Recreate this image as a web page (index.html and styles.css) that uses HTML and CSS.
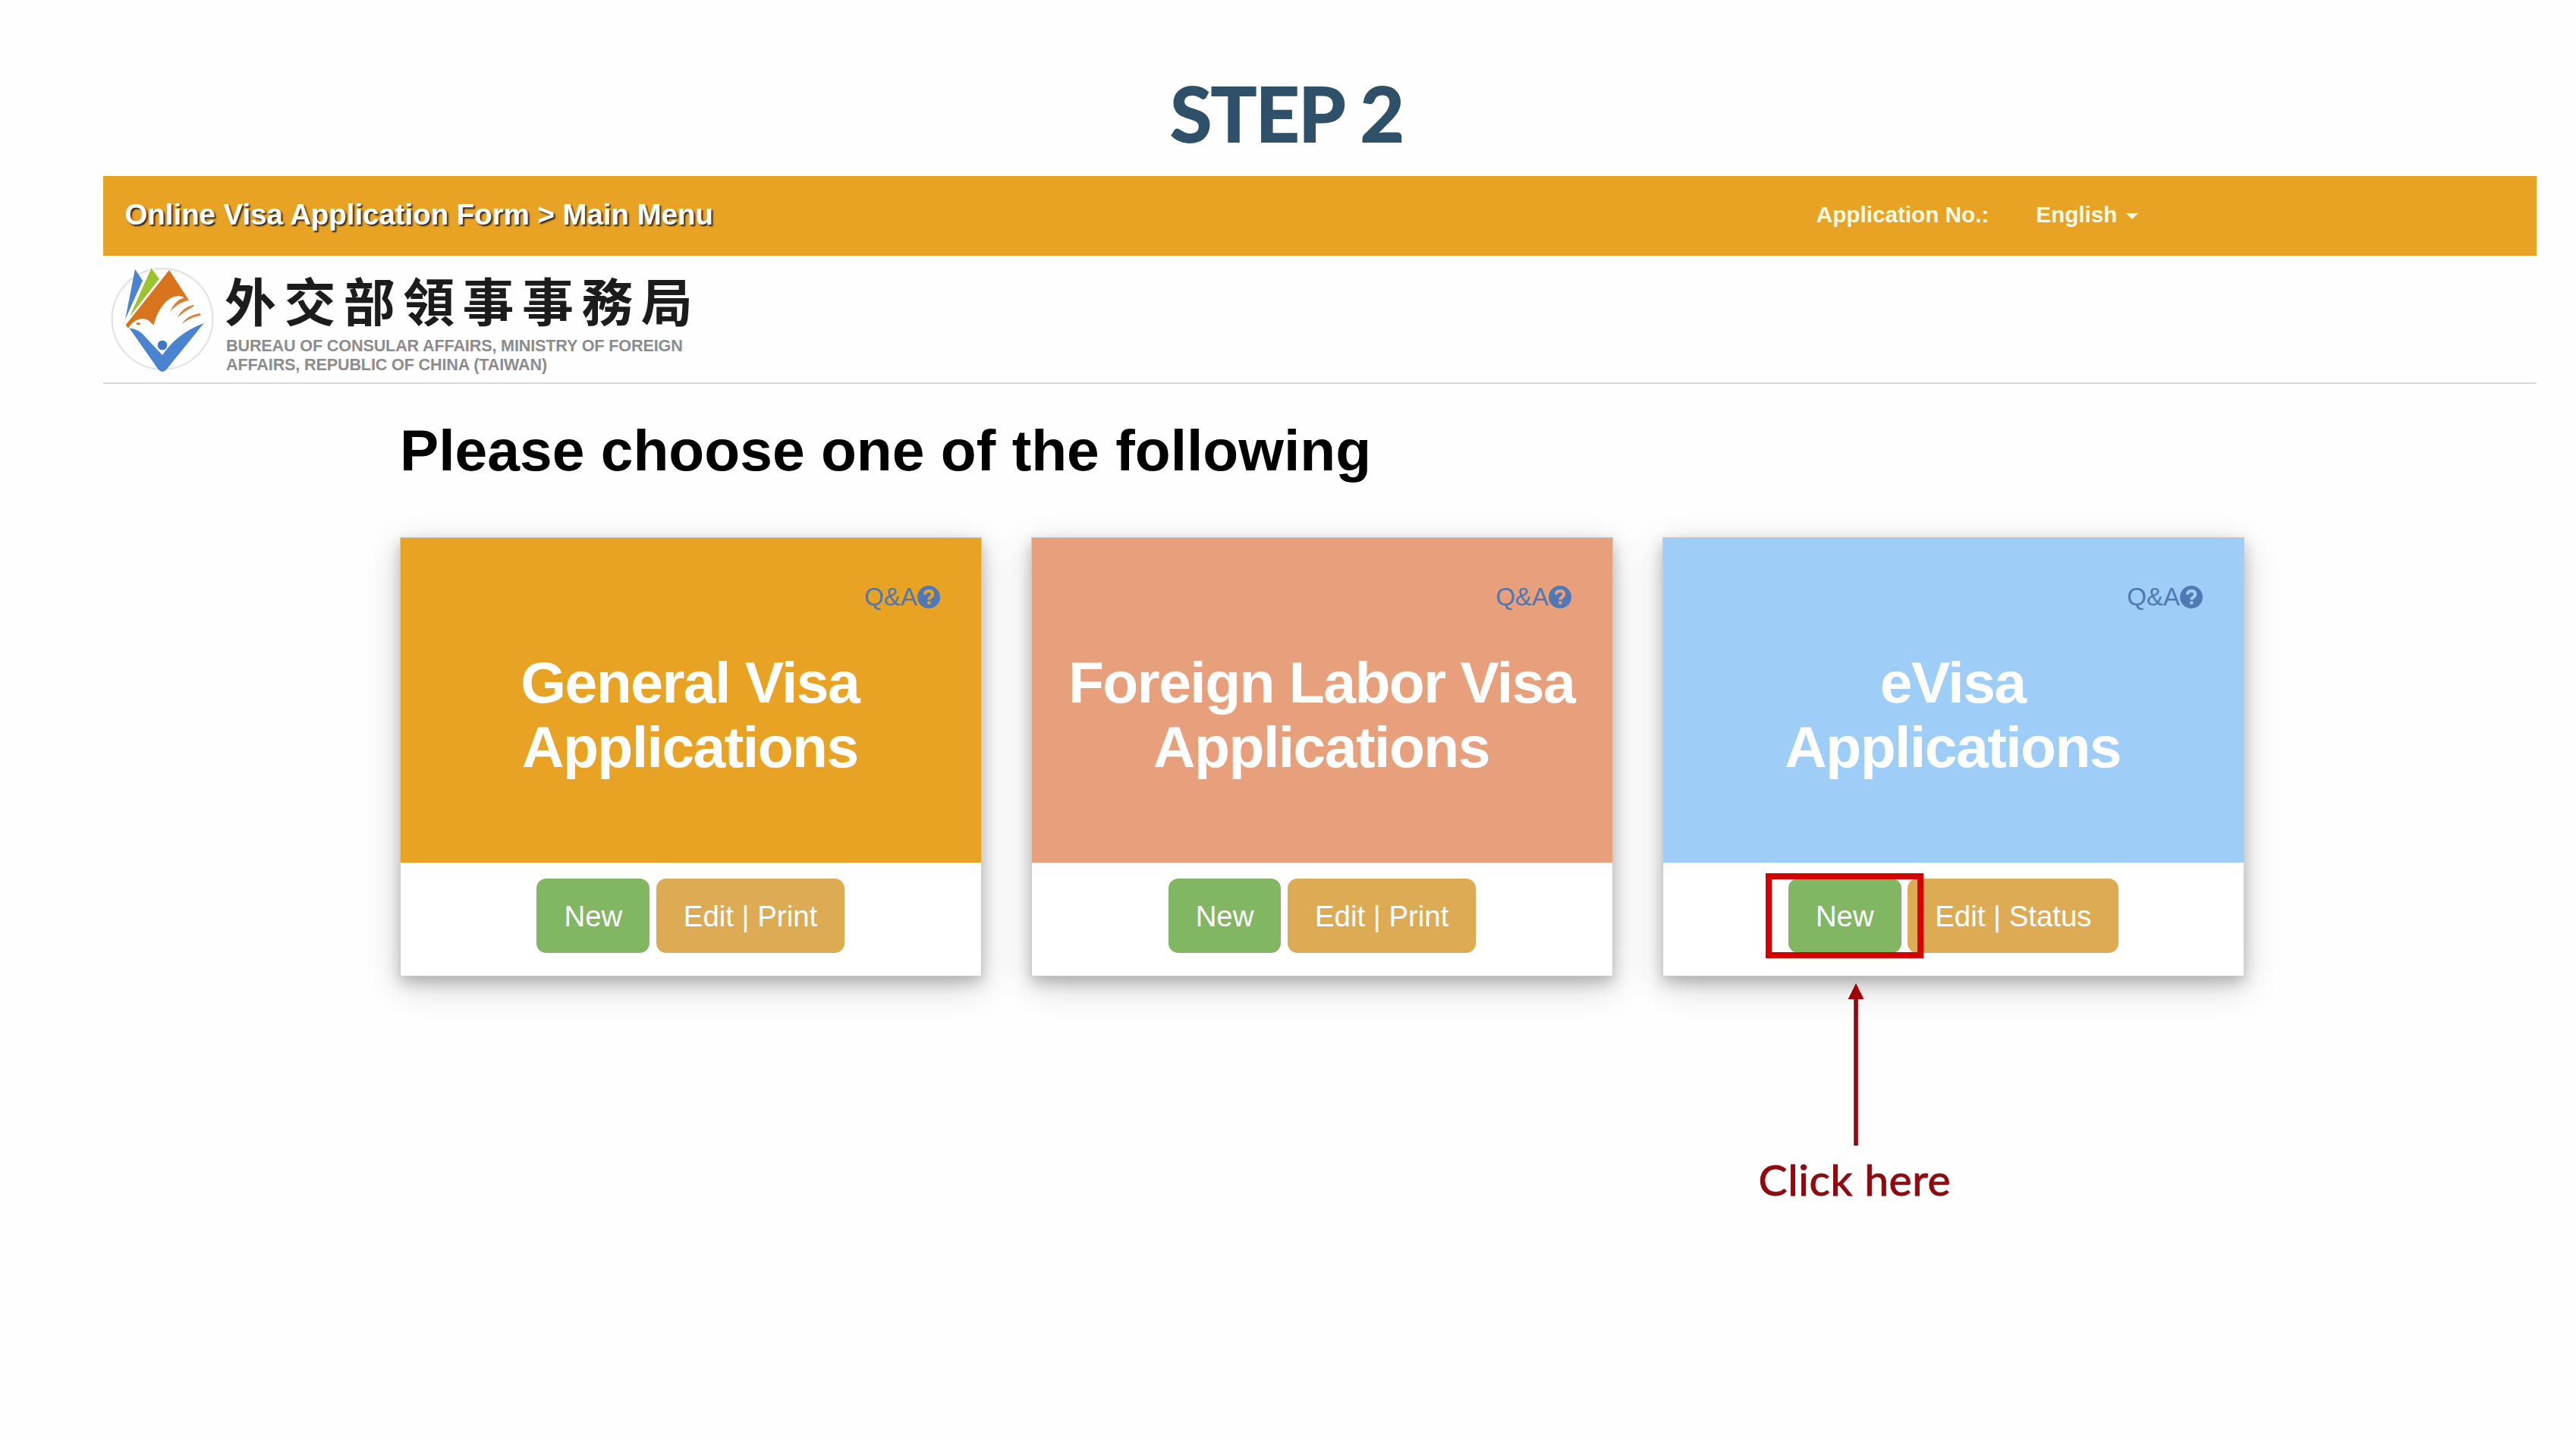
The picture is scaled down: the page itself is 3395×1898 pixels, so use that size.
FILE: index.html
```html
<!DOCTYPE html>
<html lang="en">
<head>
    <meta charset="UTF-8">
    <meta name="viewport" content="width=device-width, initial-scale=1.0">
    <title>Online Visa Application Form - Main Menu</title>
    <link rel="stylesheet" href="styles.css">
</head>
<body>
    <h1 class="step-title">STEP 2</h1>
    <div class="page">
        <nav class="navbar">
            <div class="navbar-title">Online Visa Application Form &gt; Main Menu</div>
            <div class="navbar-menu">
                <span>Application No.:</span>
                <span class="language">English <i class="caret"></i></span>
            </div>
        </nav>
        <header class="logo-bar">
            <svg class="logo" viewBox="60 50 450 440">
                <circle cx="282" cy="270" r="199" fill="none" stroke="#e4e4e6" stroke-width="7"/>
                <path d="M174 73L204 118L135 272Z" fill="#4a84d0"/>
                <path d="M238 65L272 112L144 276Z" fill="#9cc32f" stroke="#fff" stroke-width="4"/>
                <path d="M309 77L388 198Q372 188 360 181Q315 172 283 217Q258 250 248 294L238 287Q228 270 202 269Q170 270 146 307L137 294Z" fill="#d7741d"/>
                <path d="M370 184Q330 197 311 244Q335 210 385 196ZM406 214Q362 223 340 266Q365 242 406 220ZM432 248Q380 255 359 290Q390 264 434 256Z" fill="#d9813a"/>
                <ellipse cx="187" cy="289" rx="8" ry="5" fill="#d7741d"/>
                <path d="M151 306Q188 309 216 343L282 413Q340 326 446 287L298 470Q282 488 266 470Z" fill="#4a84d0"/>
                <circle cx="282" cy="374" r="19" fill="#4077c4"/>
            </svg>
            <div class="logo-text">
                <div class="logo-zh" lang="zh-Hant">外交部領事事務局</div>
                <div class="logo-en">BUREAU OF CONSULAR AFFAIRS, MINISTRY OF FOREIGN<br>AFFAIRS, REPUBLIC OF CHINA (TAIWAN)</div>
            </div>
        </header>
        <main class="content">
            <h2>Please choose one of the following</h2>
            <div class="cards">
                <div class="card">
                    <div class="card-header general">
                        <a class="qa">Q&amp;A<svg viewBox="0 0 16 16"><circle cx="8" cy="8" r="8"/><path d="M5.3 6.2Q5.4 3.6 8.1 3.6Q10.7 3.7 10.7 6Q10.7 7.3 9.3 8.1Q8.2 8.7 8.2 9.8M8.2 10.9V13"/></svg></a>
                        <h3>General Visa<br>Applications</h3>
                    </div>
                    <div class="card-footer">
                        <a class="btn btn-new">New</a>
                        <a class="btn btn-edit">Edit | Print</a>
                    </div>
                </div>
                <div class="card">
                    <div class="card-header labor">
                        <a class="qa">Q&amp;A<svg viewBox="0 0 16 16"><circle cx="8" cy="8" r="8"/><path d="M5.3 6.2Q5.4 3.6 8.1 3.6Q10.7 3.7 10.7 6Q10.7 7.3 9.3 8.1Q8.2 8.7 8.2 9.8M8.2 10.9V13"/></svg></a>
                        <h3>Foreign Labor Visa<br>Applications</h3>
                    </div>
                    <div class="card-footer">
                        <a class="btn btn-new">New</a>
                        <a class="btn btn-edit">Edit | Print</a>
                    </div>
                </div>
                <div class="card">
                    <div class="card-header evisa">
                        <a class="qa">Q&amp;A<svg viewBox="0 0 16 16"><circle cx="8" cy="8" r="8"/><path d="M5.3 6.2Q5.4 3.6 8.1 3.6Q10.7 3.7 10.7 6Q10.7 7.3 9.3 8.1Q8.2 8.7 8.2 9.8M8.2 10.9V13"/></svg></a>
                        <h3>eVisa<br>Applications</h3>
                    </div>
                    <div class="card-footer">
                        <a class="btn btn-new">New</a>
                        <a class="btn btn-edit">Edit | Status</a>
                    </div>
                    <!-- callout on top of the New button -->
                    <div class="highlight"></div>
                    <div class="callout">
                        <svg class="arrow" viewBox="0 0 22 214"><path d="M8.2 20H13.8V214H8.2Z" fill="#8f0a0f"/><path d="M11 0L21.4 21H0.6Z" fill="#a00005"/></svg>
                        <span>Click here</span>
                    </div>
                </div>
            </div>
        </main>
    </div>
</body>
</html>
```
FILE: styles.css
```css
* {
    box-sizing: border-box;
}

body {
    margin: 0;
    min-height: 100vh;
    background-color: #fefefe;
    font-family: "Liberation Sans", Arial, sans-serif;
    overflow: hidden;
}

h1, h2, h3 {
    margin: 0;
}

.step-title {
    height: 232px;
    padding: 88px 3px 0 0;
    font-family: Lato, sans-serif;
    font-size: 100px;
    line-height: 120px;
    letter-spacing: -1px;
    text-align: center;
    color: #2f5069;
    -webkit-text-stroke: 2px #2f5069;
}

.page {
    margin: 0 52.5px 0 135.5px;
}

.navbar {
    display: flex;
    justify-content: space-between;
    align-items: center;
    height: 105px;
    padding: 0 525px 4px 29px;
    background-color: #e8a325;
    color: #fff;
    font-weight: bold;
}

.navbar-title {
    font-size: 38.4px;
    text-shadow: 2px 2px 2px #222;
}

.navbar-menu {
    display: flex;
    gap: 62px;
    font-size: 29.7px;
    color: #fffbe8;
}

.language {
    display: flex;
    align-items: center;
    gap: 11px;
}

.caret {
    border-top: 8px solid #fffbe8;
    border-left: 8px solid transparent;
    border-right: 8px solid transparent;
    margin-top: 4px;
}

.logo-bar {
    display: flex;
    height: 168.5px;
    padding: 9.5px 0 0 4.5px;
    border-bottom: 2px solid #d6d6d6;
}

.logo {
    width: 150px;
    height: 146.7px;
}

.logo-text {
    padding: 8px 0 0 6px;
}

.logo-zh {
    font-family: "Noto Sans CJK TC", sans-serif;
    font-size: 68px;
    font-weight: bold;
    line-height: 80px;
    letter-spacing: 10.4px;
    color: #1c1c1c;
}

.logo-en {
    margin-top: 8px;
    padding-left: 2px;
    font-size: 21.6px;
    font-weight: bold;
    line-height: 25px;
    letter-spacing: -0.15px;
    color: #8c8c8c;
}

.content {
    padding: 42px 384.5px 0 391.5px;
}

.content h2 {
    font-size: 76.8px;
    line-height: 90px;
    color: #000;
}

.cards {
    display: flex;
    gap: 65.5px;
    margin-top: 70px;
}

.card {
    position: relative;
    flex: 1;
    height: 579px;
    border: 1.5px solid #ccc;
    background-color: #fff;
    box-shadow: 0 8px 17px rgba(0, 0, 0, 0.2), 0 13px 43px rgba(0, 0, 0, 0.19);
}

.card-header {
    height: 428px;
    padding: 57px 54px 0 50px;
    text-align: center;
    color: #fff;
}

.general {
    background-color: #e8a325;
}

.labor {
    background-color: #e79f7c;
}

.evisa {
    background-color: #9ecdf7;
}

.qa {
    display: flex;
    justify-content: flex-end;
    align-items: center;
    height: 42px;
    font-size: 33px;
    color: #4f78b5;
}

.evisa .qa {
    color: #4f79b4;
}

.qa svg {
    width: 30px;
    height: 30px;
    fill: currentColor;
}

.qa path {
    fill: none;
    stroke: #e8a325;
    stroke-width: 2.2;
}

.labor .qa path {
    stroke: #e79f7c;
}

.evisa .qa path {
    stroke: #9ecdf7;
}

.card-header h3 {
    margin: 49px -38px 0 -36px;
    font-size: 76.8px;
    line-height: 85px;
    letter-spacing: -1.5px;
}

.card-footer {
    display: flex;
    justify-content: center;
    gap: 8.5px;
    padding-top: 21.5px;
}

.btn {
    height: 97.5px;
    padding: 3px 36px 0;
    border-radius: 13px;
    font-size: 38.4px;
    line-height: 94px;
    color: #fff;
}

.btn-new {
    background-color: #81b663;
}

.btn-edit {
    background-color: #deab55;
}

.highlight {
    position: absolute;
    top: 442px;
    left: 135px;
    width: 208px;
    height: 112px;
    border: 8px solid #d40000;
}

.callout {
    position: absolute;
    top: 587px;
    left: 104px;
    width: 300px;
    display: flex;
    flex-direction: column;
    align-items: center;
    font-family: Lato, sans-serif;
    font-size: 57px;
    line-height: 66px;
    letter-spacing: 0.6px;
    color: #8f0a0f;
    -webkit-text-stroke: 1px #8f0a0f;
}

.callout span {
    margin-top: 11px;
    margin-right: 4px;
}

.arrow {
    width: 22px;
    height: 214px;
}
```
